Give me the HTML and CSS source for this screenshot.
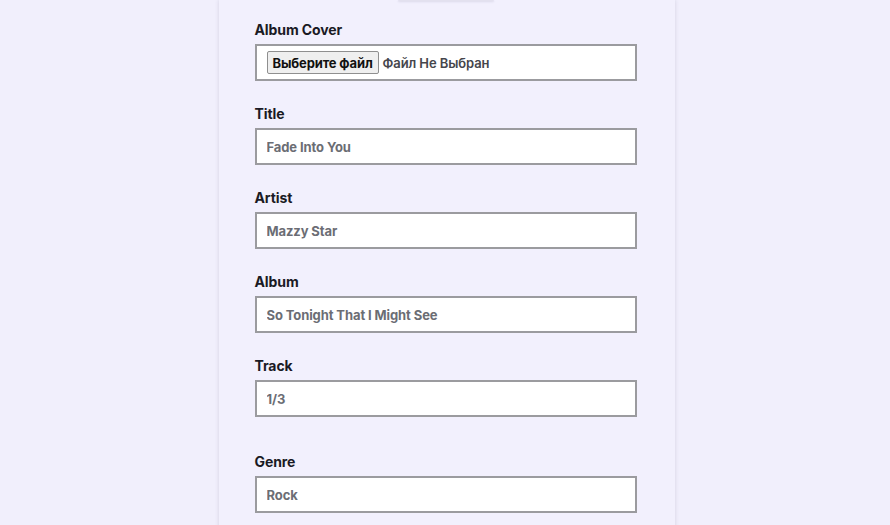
FILE: index.html
```html
<!DOCTYPE html>
<html lang="ru">
<head>
<meta charset="utf-8">
<title>Edit Track</title>
<link rel="stylesheet" href="styles.css">
</head>
<body>
<main class="panel">
  <div class="cover-preview"></div>
  <form class="form">
    <div class="field">
      <label class="label">Album Cover</label>
      <div class="input file-input">
        <button type="button" class="file-btn">Выберите файл</button>
        <span class="file-name">Файл Не Выбран</span>
      </div>
    </div>
    <div class="field">
      <label class="label" for="title">Title</label>
      <input class="input" id="title" type="text" value="Fade Into You">
    </div>
    <div class="field">
      <label class="label" for="artist">Artist</label>
      <input class="input" id="artist" type="text" value="Mazzy Star">
    </div>
    <div class="field">
      <label class="label" for="album">Album</label>
      <input class="input" id="album" type="text" value="So Tonight That I Might See">
    </div>
    <div class="field">
      <label class="label" for="track">Track</label>
      <input class="input" id="track" type="text" value="1/3">
    </div>
    <div class="field field-spaced">
      <label class="label" for="genre">Genre</label>
      <input class="input" id="genre" type="text" value="Rock">
    </div>
  </form>
</main>
</body>
</html>
```
FILE: styles.css
```css
html, body {
  margin: 0;
  padding: 0;
}
body {
  background: #f1effc;
  font-family: Inter, "Noto Sans", "Liberation Sans", sans-serif;
  height: 525px;
  overflow: hidden;
  padding-left: 3px;
}
.panel {
  width: 456px;
  margin: 0 auto;
  min-height: 560px;
  box-sizing: border-box;
  padding: 0 37px 0 36px;
  background: #f2f0fd;
  box-shadow: 0 0 4px rgba(90, 85, 120, 0.2);
  display: flex;
  flex-direction: column;
  align-items: stretch;
}
.cover-preview {
  align-self: center;
  width: 96px;
  height: 1px;
  background: #e3e1ef;
  border-radius: 0 0 3px 3px;
  box-shadow: 0 1px 2px rgba(90, 85, 120, 0.2);
}
.form {
  display: flex;
  flex-direction: column;
  padding-top: 20px;
}
.field {
  display: flex;
  flex-direction: column;
  gap: 6px;
  height: 84px;
}
.field-spaced {
  margin-top: 12px;
}
.label {
  font-size: 14px;
  font-weight: 700;
  color: #1a1a24;
  line-height: 17px;
  letter-spacing: -0.1px;
}
.input {
  box-sizing: border-box;
  width: 382px;
  height: 37px;
  border: 2px solid #9b9b9f;
  background: #ffffff;
  padding: 0 10px;
  font-family: Inter, "Noto Sans", "Liberation Sans", sans-serif;
  font-size: 13px;
  font-weight: 700;
  letter-spacing: -0.1px;
  color: #6b6d74;
  outline: none;
  margin: 0;
}
.file-input {
  display: flex;
  align-items: center;
  gap: 4px;
}
.file-btn {
  height: 23px;
  padding: 0 5px;
  background: #efefef;
  border: 1px solid #8f8f8f;
  border-radius: 2px;
  font-family: Inter, "Noto Sans", "Liberation Sans", sans-serif;
  font-size: 13px;
  font-weight: 700;
  letter-spacing: -0.15px;
  color: #111;
  margin: 0;
}
.file-name {
  font-size: 13px;
  font-weight: 600;
  color: #45464c;
}
```
